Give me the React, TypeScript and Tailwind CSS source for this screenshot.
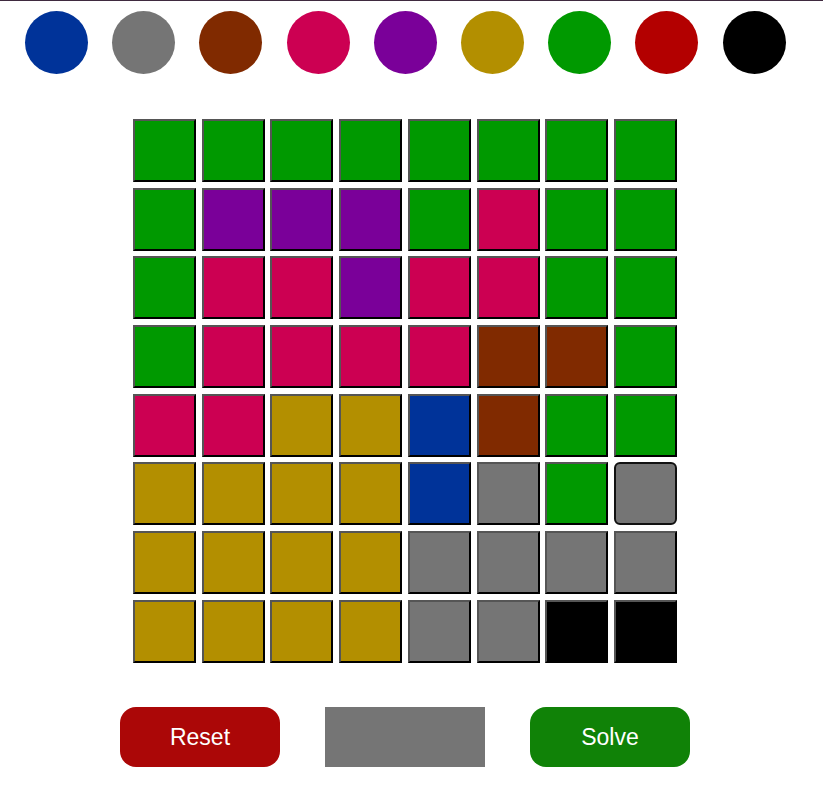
import React from 'react';

const C: Record<string, string> = {
  bl: 'bg-[#003399]',
  gr: 'bg-[#757575]',
  br: 'bg-[#802a00]',
  pk: 'bg-[#cc0052]',
  pu: 'bg-[#7a0099]',
  ye: 'bg-[#b38f00]',
  gn: 'bg-[#009900]',
  rd: 'bg-[#b30000]',
  bk: 'bg-[#000000]',
};

const PALETTE = ['bl', 'gr', 'br', 'pk', 'pu', 'ye', 'gn', 'rd', 'bk'];

const BOARD = [
  ['gn', 'gn', 'gn', 'gn', 'gn', 'gn', 'gn', 'gn'],
  ['gn', 'pu', 'pu', 'pu', 'gn', 'pk', 'gn', 'gn'],
  ['gn', 'pk', 'pk', 'pu', 'pk', 'pk', 'gn', 'gn'],
  ['gn', 'pk', 'pk', 'pk', 'pk', 'br', 'br', 'gn'],
  ['pk', 'pk', 'ye', 'ye', 'bl', 'br', 'gn', 'gn'],
  ['ye', 'ye', 'ye', 'ye', 'bl', 'gr', 'gn', 'gr'],
  ['ye', 'ye', 'ye', 'ye', 'gr', 'gr', 'gr', 'gr'],
  ['ye', 'ye', 'ye', 'ye', 'gr', 'gr', 'bk', 'bk'],
];

export default function App() {
  return (
    <div className="min-h-[804px] w-[823px] border-t border-[#3f2a3f] bg-white font-['Liberation_Sans',Arial,sans-serif]">
      <div className="w-[810px]">
        <div className="flex gap-[24.2px] pl-[25px] pt-[10px]">
          {PALETTE.map((c) => (
            <div key={c} className={`h-[63px] w-[63px] rounded-full ${C[c]}`} />
          ))}
        </div>

        <div className="mt-[45px] flex justify-center">
          <div className="grid grid-cols-[repeat(8,63px)] gap-[5.7px]">
            {BOARD.flatMap((row, r) =>
              row.map((c, i) => {
                const selected = r === 5 && i === 7;
                return (
                  <div
                    key={`${r}-${i}`}
                    className={
                      selected
                        ? `h-[63px] w-[63px] rounded-[6px] border-2 border-[#111111] ${C[c]}`
                        : `h-[63px] w-[63px] border-2 border-t-[#555555] border-l-[#555555] border-b-black border-r-black ${C[c]}`
                    }
                  />
                );
              })
            )}
          </div>
        </div>

        <div className="mt-[44px] flex justify-center gap-[45px]">
          <button className="h-[60px] w-[160px] rounded-[16px] bg-[#ab0707] text-[23px] text-white">
            Reset
          </button>
          <div className="h-[60px] w-[160px] bg-[#757575]" />
          <button className="h-[60px] w-[160px] rounded-[16px] bg-[#108207] text-[23px] text-white">
            Solve
          </button>
        </div>
      </div>
    </div>
  );
}
